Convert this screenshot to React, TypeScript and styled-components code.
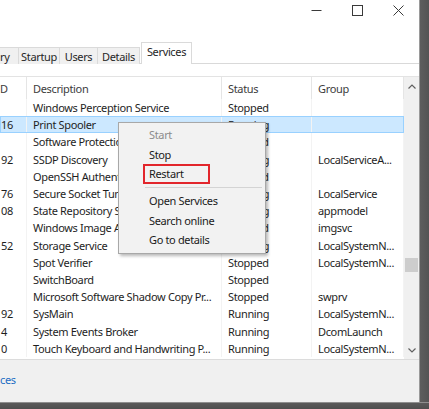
import React from "react";
import styled, { createGlobalStyle, css } from "styled-components";

const GlobalStyle = createGlobalStyle`
  html, body {
    margin: 0;
    padding: 0;
    background: #5b5b5b;
  }
  body {
    font-family: "Noto Sans", "Open Sans", "Liberation Sans", sans-serif;
    font-size: 11px;
    letter-spacing: -0.35px;
    color: #1e1e1e;
  }
`;

interface Service {
  pid: string;
  desc: string;
  status: string;
  group: string;
  selected?: boolean;
}

const services: Service[] = [
  { pid: "", desc: "Windows Perception Service", status: "Stopped", group: "" },
  { pid: "16", desc: "Print Spooler", status: "Running", group: "", selected: true },
  { pid: "", desc: "Software Protection", status: "Stopped", group: "" },
  { pid: "92", desc: "SSDP Discovery", status: "Running", group: "LocalServiceA..." },
  { pid: "", desc: "OpenSSH Authentication Agent", status: "Stopped", group: "" },
  { pid: "76", desc: "Secure Socket Tunneling Protocol", status: "Running", group: "LocalService" },
  { pid: "08", desc: "State Repository Service", status: "Running", group: "appmodel" },
  { pid: "", desc: "Windows Image Acquisition", status: "Stopped", group: "imgsvc" },
  { pid: "52", desc: "Storage Service", status: "Running", group: "LocalSystemN..." },
  { pid: "", desc: "Spot Verifier", status: "Stopped", group: "LocalSystemN..." },
  { pid: "", desc: "SwitchBoard", status: "Stopped", group: "" },
  { pid: "", desc: "Microsoft Software Shadow Copy Pr...", status: "Stopped", group: "swprv" },
  { pid: "92", desc: "SysMain", status: "Running", group: "LocalSystemN..." },
  { pid: "4", desc: "System Events Broker", status: "Running", group: "DcomLaunch" },
  { pid: "0", desc: "Touch Keyboard and Handwriting P...", status: "Running", group: "LocalSystemN..." },
];

const tabs = ["ry", "Startup", "Users", "Details", "Services"];
const tabWidths = [19, 41, 38, 42, 51];

const Screen = styled.div`
  width: 429px;
  height: 409px;
  display: flex;
  flex-direction: column;
  overflow: hidden;
`;
const WindowRow = styled.div`
  display: flex;
  height: 402px;
`;
const Window = styled.div`
  width: 419px;
  display: flex;
  flex-direction: column;
  background: #fff;
`;
const RightEdge = styled.div`
  flex: 1;
  background: linear-gradient(90deg, #9a9a9a 0, #9a9a9a 1px, #5e5e5e 1px, #545454 100%);
`;
const BottomEdge = styled.div`
  flex: 1;
  background: linear-gradient(180deg, #8e8e8e 0, #8e8e8e 1px, #5a5a5a 1px, #4e4e4e 100%);
`;

const TitleBar = styled.div`
  height: 43px;
  display: flex;
  justify-content: flex-end;
  align-items: flex-start;
`;
const CaptionButton = styled.div`
  width: 41px;
  height: 21px;
  display: flex;
  align-items: center;
  justify-content: center;
  color: #3a3a3a;
`;

const TabStrip = styled.div`
  height: 21px;
  display: flex;
  align-items: flex-end;
  border-bottom: 1px solid #d9d9d9;
  box-sizing: border-box;
`;
const Tab = styled.div<{ $active: boolean; $w: number; $clipped?: boolean }>`
  width: ${(p) => p.$w}px;
  height: 17px;
  box-sizing: border-box;
  background: #f0f0f0;
  border: 1px solid #dadada;
  border-bottom: none;
  border-left: none;
  display: flex;
  align-items: center;
  justify-content: ${(p) => (p.$clipped ? "flex-start" : "center")};
  color: #262626;
  margin-bottom: -1px;
  ${(p) =>
    p.$active &&
    css`
      height: 22px;
      background: #fff;
      border-left: 1px solid #dadada;
      margin-left: 1px;
      padding-bottom: 5px;
      position: relative;
    `}
`;
const Gap = styled.div`
  height: 12px;
`;

const ListArea = styled.div`
  display: flex;
  height: 283px;
  border-top: 1px solid #e3e3e3;
  box-sizing: border-box;
`;
const Columns = styled.div`
  width: 404px;
  display: flex;
  flex-direction: column;
  overflow: hidden;
`;
const gridCols = "27px 195px 90px 92px";
const HeaderRow = styled.div`
  height: 22px;
  display: grid;
  grid-template-columns: ${gridCols};
  color: #3c3c3c;
`;
const HeaderCell = styled.div<{ $pad: number }>`
  padding-left: ${(p) => p.$pad}px;
  display: flex;
  align-items: center;
  border-right: 1px solid #e5e5e5;
  white-space: nowrap;
  overflow: hidden;
`;
const Row = styled.div<{ $selected?: boolean }>`
  height: 17.2px;
  display: grid;
  grid-template-columns: ${gridCols};
  box-sizing: border-box;
  ${(p) =>
    p.$selected &&
    css`
      background: #cce8ff;
      outline: 1px solid #99d1ff;
      outline-offset: -1px;
    `}
`;
const Cell = styled.div<{ $pad: number }>`
  padding-left: ${(p) => p.$pad}px;
  display: flex;
  align-items: center;
  white-space: nowrap;
  overflow: hidden;
  border-right: 1px solid #f3f3f3;
`;

const ScrollBar = styled.div`
  flex: 1;
  background: #f0f0f0;
  display: flex;
  flex-direction: column;
  align-items: center;
  color: #606060;
`;
const ScrollArrow = styled.div`
  height: 18px;
  display: flex;
  align-items: center;
  justify-content: center;
`;
const ScrollTrack = styled.div`
  flex: 1;
  width: 100%;
  display: flex;
  flex-direction: column;
  padding-top: 163px;
  box-sizing: border-box;
`;
const ScrollThumb = styled.div`
  height: 14px;
  margin: 0 1px;
  background: #cdcdcd;
`;

const Footer = styled.div`
  flex: 1;
  background: #f0f0f0;
  border-top: 1px solid #dcdcdc;
  display: flex;
  align-items: center;
  padding-bottom: 3px;
`;
const FooterLink = styled.span`
  color: #1c6dc4;
`;

const Menu = styled.div`
  position: absolute;
  left: 118px;
  top: 122px;
  width: 148px;
  box-sizing: border-box;
  padding: 2px 0 3px;
  background: #f2f2f2;
  border: 1px solid #a8a8a8;
  box-shadow: 2px 2px 3px rgba(0, 0, 0, 0.28);
`;
const MenuItem = styled.div<{ $disabled?: boolean }>`
  height: 19.6px;
  display: flex;
  align-items: center;
  padding-left: 30px;
  position: relative;
  color: ${(p) => (p.$disabled ? "#8c8c8c" : "#1a1a1a")};
`;
const MenuSeparator = styled.div`
  height: 1px;
  background: #d4d4d4;
  margin: 3px 3px 3px 26px;
`;
const RedBox = styled.div`
  position: absolute;
  left: 24px;
  top: 0px;
  width: 67px;
  height: 20px;
  box-sizing: border-box;
  border: 2px solid #e2262c;
`;

const Stage = styled.div`
  position: relative;
`;

export default function App() {
  return (
    <Stage>
      <GlobalStyle />
      <Screen>
        <WindowRow>
          <Window>
            <TitleBar>
              <CaptionButton>
                <svg width="11" height="11" viewBox="0 0 11 11">
                  <path d="M0.5 5.5h10" stroke="currentColor" strokeWidth="1" />
                </svg>
              </CaptionButton>
              <CaptionButton>
                <svg width="11" height="11" viewBox="0 0 11 11">
                  <rect x="0.5" y="0.5" width="10" height="10" fill="none" stroke="currentColor" strokeWidth="1" />
                </svg>
              </CaptionButton>
              <CaptionButton>
                <svg width="11" height="11" viewBox="0 0 11 11">
                  <path d="M0.5 0.5l10 10M10.5 0.5l-10 10" stroke="currentColor" strokeWidth="1" />
                </svg>
              </CaptionButton>
            </TitleBar>
            <TabStrip>
              {tabs.map((t, i) => (
                <Tab key={t} $active={t === "Services"} $clipped={i === 0} $w={tabWidths[i]}>
                  {t}
                </Tab>
              ))}
            </TabStrip>
            <Gap />
            <ListArea>
              <Columns>
                <HeaderRow>
                  <HeaderCell $pad={0}>D</HeaderCell>
                  <HeaderCell $pad={6}>Description</HeaderCell>
                  <HeaderCell $pad={6}>Status</HeaderCell>
                  <HeaderCell $pad={6}>Group</HeaderCell>
                </HeaderRow>
                {services.map((s, i) => (
                  <Row key={i} $selected={s.selected}>
                    <Cell $pad={1}>{s.pid}</Cell>
                    <Cell $pad={6}>{s.desc}</Cell>
                    <Cell $pad={6}>{s.status}</Cell>
                    <Cell $pad={6}>{s.group}</Cell>
                  </Row>
                ))}
              </Columns>
              <ScrollBar>
                <ScrollArrow>
                  <svg width="8" height="5" viewBox="0 0 8 5">
                    <path d="M0.5 4.5L4 1l3.5 3.5" fill="none" stroke="currentColor" strokeWidth="1.2" />
                  </svg>
                </ScrollArrow>
                <ScrollTrack>
                  <ScrollThumb />
                </ScrollTrack>
                <ScrollArrow>
                  <svg width="8" height="5" viewBox="0 0 8 5">
                    <path d="M0.5 0.5L4 4l3.5-3.5" fill="none" stroke="currentColor" strokeWidth="1.2" />
                  </svg>
                </ScrollArrow>
              </ScrollBar>
            </ListArea>
            <Footer>
              <FooterLink>ces</FooterLink>
            </Footer>
          </Window>
          <RightEdge />
        </WindowRow>
        <BottomEdge />
      </Screen>
      <Menu>
        <MenuItem $disabled>Start</MenuItem>
        <MenuItem>Stop</MenuItem>
        <MenuItem>
          Restart
          <RedBox />
        </MenuItem>
        <MenuSeparator />
        <MenuItem>Open Services</MenuItem>
        <MenuItem>Search online</MenuItem>
        <MenuItem>Go to details</MenuItem>
      </Menu>
    </Stage>
  );
}
